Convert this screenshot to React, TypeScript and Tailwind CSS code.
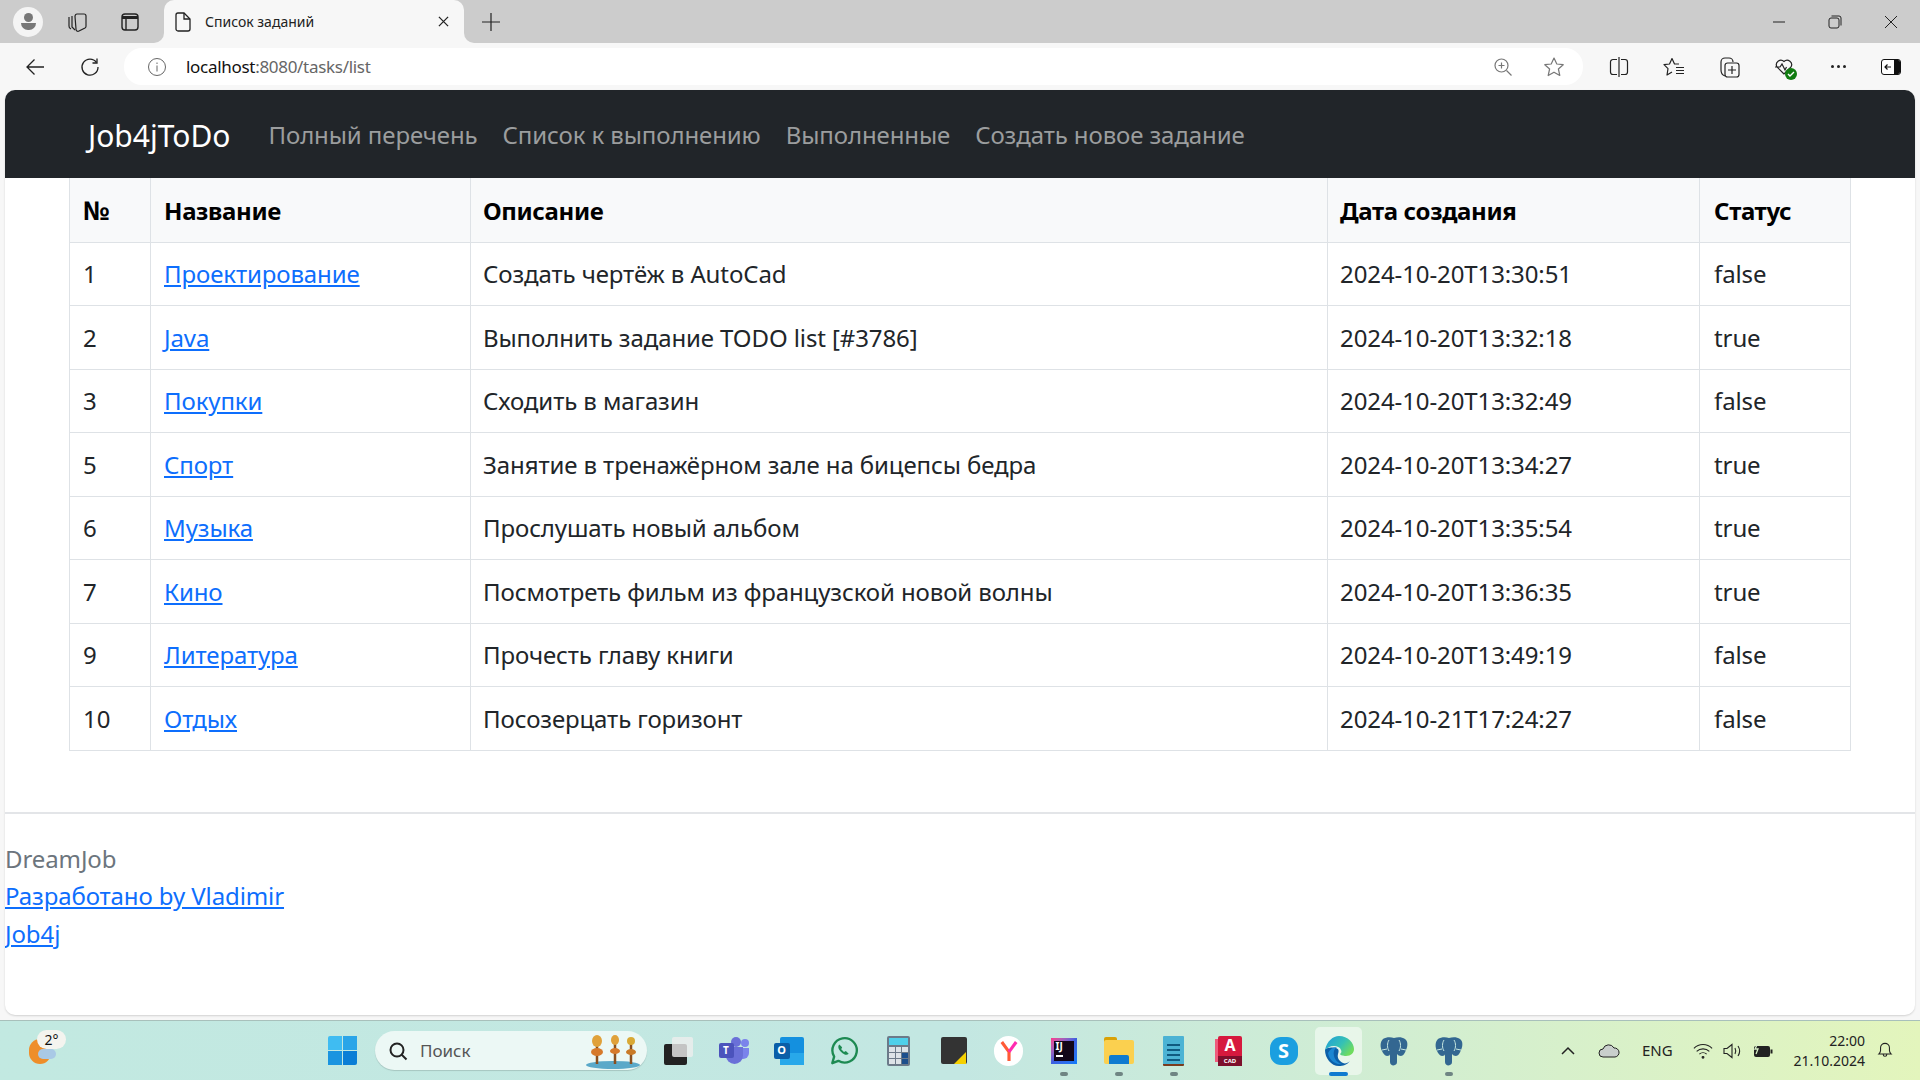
import type { ReactNode } from 'react';

const rows = [
  ['1', 'Проектирование', 'Создать чертёж в AutoCad', '2024-10-20T13:30:51', 'false'],
  ['2', 'Java', 'Выполнить задание TODO list [#3786]', '2024-10-20T13:32:18', 'true'],
  ['3', 'Покупки', 'Сходить в магазин', '2024-10-20T13:32:49', 'false'],
  ['5', 'Спорт', 'Занятие в тренажёрном зале на бицепсы бедра', '2024-10-20T13:34:27', 'true'],
  ['6', 'Музыка', 'Прослушать новый альбом', '2024-10-20T13:35:54', 'true'],
  ['7', 'Кино', 'Посмотреть фильм из французской новой волны', '2024-10-20T13:36:35', 'true'],
  ['9', 'Литература', 'Прочесть главу книги', '2024-10-20T13:49:19', 'false'],
  ['10', 'Отдых', 'Посозерцать горизонт', '2024-10-21T17:24:27', 'false'],
];

const th = 'border border-t-0 border-[#dee2e6] pt-[2px]';
const td = 'border border-[#dee2e6] pt-px';

function ToolCell({ children }: { children: ReactNode }) {
  return <div className="w-[55px] shrink-0 flex items-center justify-center">{children}</div>;
}

function TaskCell({ children, running }: { children: ReactNode; running?: boolean }) {
  return (
    <div className="w-[55px] h-[60px] shrink-0 relative flex items-center justify-center">
      {children}
      {running && <div className="absolute bottom-[5px] w-[8px] h-[4px] rounded-full bg-[#6f8583]" />}
    </div>
  );
}

function Elephant() {
  return (
    <svg width="30" height="30" viewBox="0 0 30 30">
      <path d="M15 2C12 1 7 1 4 3 1 6 1 11 3 15c1 2 3 5 5 5 2 0 3-1 3-2v8c0 3 3 4 5 3 2-1 2-2 2-4v-7c1 1 2 2 4 2 2 0 4-3 5-6 2-4 2-9-1-11-3-2-7-2-11-1z" fill="#336791" />
      <path d="M10 4c-2 3-2 8 0 11M20 4c2 3 2 8 0 11M3 14l5-1M27 14l-5-1" fill="none" stroke="#c5e6e0" strokeWidth="1" />
    </svg>
  );
}

export default function App() {
  return (
    <div className="w-[1920px] h-[1080px] flex flex-col overflow-hidden bg-[#f7f7f7] font-['Noto_Sans','Open_Sans',sans-serif]">
      {/* Tabs */}
      <div className="h-[43px] shrink-0 bg-[#cccccc] flex items-center">
        <div className="ml-[13px] w-[30px] h-[30px] rounded-full bg-[#f4f4f4] flex flex-col items-center justify-center">
          <div className="w-[9px] h-[9px] rounded-full bg-[#777]" />
          <div className="w-[15px] h-[7px] rounded-b-full rounded-t-sm bg-[#777] mt-px" />
        </div>
        <svg width="21" height="20" viewBox="0 0 21 20" className="ml-[24px]" fill="none" stroke="#222" strokeWidth="1.2">
          <path d="M2 5v9a3 3 0 0 0 2 3" />
          <path d="M5 4v11l3 3" />
          <path d="M8 4.500C8 3 9 2 10 2h7a2 2 0 0 1 2 2v10a2 2 0 0 1-1 2l-6 3a2 2 0 0 1-3-2z" />
        </svg>
        <svg width="18" height="18" viewBox="0 0 18 18" className="ml-[33px]" fill="none" stroke="#222" strokeWidth="1.4">
          <rect x="1" y="1" width="16" height="16" rx="3" />
          <path d="M1 4.500h16" strokeWidth="3" />
          <path d="M5 5v12" />
        </svg>
        <div className="ml-[25px] w-[300px] h-[43px] bg-[#f7f7f7] rounded-t-[10px] flex items-center pl-[11px] pr-[15px] relative">
          <div className="absolute left-[-10px] bottom-0 w-[10px] h-[10px] bg-[#f7f7f7]">
            <div className="w-full h-full bg-[#cccccc] rounded-br-[10px]" />
          </div>
          <div className="absolute right-[-10px] bottom-0 w-[10px] h-[10px] bg-[#f7f7f7]">
            <div className="w-full h-full bg-[#cccccc] rounded-bl-[10px]" />
          </div>
          <svg width="16" height="20" viewBox="0 0 16 20" fill="none" stroke="#222" strokeWidth="1.3">
            <path d="M1 3a2 2 0 0 1 2-2h6l6 6v10a2 2 0 0 1-2 2H3a2 2 0 0 1-2-2z" />
            <path d="M9 1v6h6" />
          </svg>
          <span className="ml-[14px] text-[14px] text-[#222] flex-1">Список заданий</span>
          <svg width="11" height="11" viewBox="0 0 12 12" stroke="#222" strokeWidth="1.4">
            <path d="M1 1l10 10M11 1L1 11" />
          </svg>
        </div>
        <svg width="18" height="18" viewBox="0 0 18 18" className="ml-[18px]" stroke="#222" strokeWidth="1.2">
          <path d="M9 0v18M0 9h18" />
        </svg>
        <div className="flex-1" />
        <svg width="14" height="14" viewBox="0 0 14 14" stroke="#222" strokeWidth="1">
          <path d="M1 7h12" />
        </svg>
        <svg width="14" height="14" viewBox="0 0 14 14" className="ml-[42px]" fill="none" stroke="#222" strokeWidth="1">
          <rect x="1" y="3" width="10" height="10" rx="2" />
          <path d="M3.500 1H11a2 2 0 0 1 2 2v7.500" />
        </svg>
        <svg width="14" height="14" viewBox="0 0 14 14" className="ml-[42px] mr-[22px]" stroke="#222" strokeWidth="1">
          <path d="M1 1l12 12M13 1L1 13" />
        </svg>
      </div>
      {/* Toolbar */}
      <div className="h-[47px] shrink-0 flex items-center">
        <svg width="20" height="20" viewBox="0 0 20 20" className="ml-[25px]" fill="none" stroke="#222" strokeWidth="1.3">
          <path d="M19 10H2M9.500 2.500L2 10l7.500 7.500" />
        </svg>
        <svg width="20" height="20" viewBox="0 0 20 20" className="ml-[35px]" fill="none" stroke="#222" strokeWidth="1.3">
          <path d="M16.500 5.500A8 8 0 1 0 18 10" />
          <path d="M17 1.500V6h-4.500" />
        </svg>
        <div className="ml-[24px] w-[1459px] h-[37px] bg-white rounded-[18px] flex items-center">
          <svg width="20" height="20" viewBox="0 0 20 20" className="ml-[23px]" fill="none" stroke="#666" strokeWidth="1">
            <circle cx="10" cy="10" r="8.500" />
            <path d="M10 8.500v6M10 5.500V7" />
          </svg>
          <span className="ml-[19px] text-[17px] tracking-[-0.3px]">
            <span className="text-[#111]">localhost</span>
            <span className="text-[#666]">:8080/tasks/list</span>
          </span>
          <div className="flex-1" />
          <svg width="20" height="20" viewBox="0 0 20 20" fill="none" stroke="#777" strokeWidth="1.2">
            <circle cx="8.500" cy="8.500" r="6.500" />
            <path d="M13.500 13.500l5 5M8.500 5.500v6M5.500 8.500h6" />
          </svg>
          <svg width="22" height="22" viewBox="0 0 22 22" className="ml-[30px] mr-[18px]" fill="none" stroke="#777" strokeWidth="1.2" strokeLinejoin="round">
            <path d="M11 2l2.800 6 6.400.7-4.800 4.300 1.400 6.500L11 16.200 5.200 19.500 6.600 13 1.800 8.700 8.200 8z" />
          </svg>
        </div>
        <div className="ml-[8px] flex">
          <ToolCell>
            <svg width="20" height="20" viewBox="0 0 20 20" fill="none" stroke="#222" strokeWidth="1.2">
              <path d="M8 2.500H4A2.500 2.500 0 0 0 1.500 5v10A2.500 2.500 0 0 0 4 17.500h4M12 2.500h4A2.500 2.500 0 0 1 18.500 5v10a2.500 2.500 0 0 1-2.500 2.500h-4M10 0v20" />
            </svg>
          </ToolCell>
          <ToolCell>
            <svg width="22" height="20" viewBox="0 0 22 20" fill="none" stroke="#222" strokeWidth="1.2" strokeLinejoin="round">
              <path d="M16 7h-4.500L9 1.500 6.500 7 1 7.700l4 4L4 18l5-3M13 10.500h8M13 13.500h8M13 16.500h8" />
            </svg>
          </ToolCell>
          <ToolCell>
            <svg width="22" height="22" viewBox="0 0 22 22" fill="none" stroke="#222" strokeWidth="1.2">
              <rect x="7" y="7" width="14" height="14" rx="2.500" />
              <path d="M14 10v8M10 14h8M3 14V6a4 4 0 0 1 4-4h4a4 4 0 0 1 4 4M3 14c0 3 1 5 4 6" />
            </svg>
          </ToolCell>
          <ToolCell>
            <div className="relative w-[20px] h-[20px]">
              <svg width="20" height="20" viewBox="0 0 20 20" fill="none" stroke="#222" strokeWidth="1.2">
                <path d="M10 17L3 10a4.500 4.500 0 0 1 7-5.500A4.500 4.500 0 0 1 17 10l-7 7zM1 10h5l2-3 3 6 1.500-3" />
              </svg>
              <div className="absolute right-[-3px] bottom-[-3px] w-[12px] h-[12px] rounded-full bg-[#107c10] flex items-center justify-center">
                <svg width="8" height="8" viewBox="0 0 8 8" fill="none" stroke="#fff" strokeWidth="1.4">
                  <path d="M1 4l2 2 4-4" />
                </svg>
              </div>
            </div>
          </ToolCell>
          <ToolCell>
            <div className="flex gap-[3px]">
              <div className="w-[3px] h-[3px] rounded-full bg-[#222]" />
              <div className="w-[3px] h-[3px] rounded-full bg-[#222]" />
              <div className="w-[3px] h-[3px] rounded-full bg-[#222]" />
            </div>
          </ToolCell>
          <div className="w-[50px] shrink-0 flex items-center justify-center">
            <svg width="20" height="16" viewBox="0 0 20 16" fill="none">
              <rect x="0.500" y="0.500" width="19" height="15" rx="2.500" fill="#fff" stroke="#111" />
              <path d="M13 1h4a2 2 0 0 1 2 2v10a2 2 0 0 1-2 2h-4z" fill="#111" />
              <path d="M10 8H4M6.500 5.500L4 8l2.500 2.500" stroke="#111" strokeWidth="1.2" />
            </svg>
          </div>
        </div>
      </div>
      {/* Page */}
      <div className="flex-1 ml-[5px] mr-[5px] mb-[5px] bg-white rounded-[10px] flex flex-col overflow-hidden shadow-[0_1px_2px_rgba(0,0,0,0.15)]">
        <nav className="h-[88px] shrink-0 bg-[#212529] flex items-center pl-[83px] pt-[2px]">
          <span className="text-[30px] text-white mr-[38px]">Job4jToDo</span>
          <div className="flex gap-[25px] text-[24px] tracking-[-0.1px] text-[#9b9d9e]">
            <span>Полный перечень</span>
            <span>Список к выполнению</span>
            <span>Выполненные</span>
            <span>Создать новое задание</span>
          </div>
        </nav>
        <div className="pl-[64px]">
          <table className="w-[1781px] table-fixed border-collapse text-[24px] tracking-[-0.1px] text-[#212529]">
            <colgroup>
              <col className="w-[81px]" />
              <col className="w-[320px]" />
              <col className="w-[857px]" />
              <col className="w-[372px]" />
              <col className="w-[151px]" />
            </colgroup>
            <thead>
              <tr className="h-[64px] bg-[#f8f9fa] font-bold text-left text-black tracking-[-0.35px]">
                <th className={`${th} px-[13px] text-[26px]`}>№</th>
                <th className={`${th} px-[13px]`}>Название</th>
                <th className={`${th} px-[12px]`}>Описание</th>
                <th className={`${th} px-[12px]`}>Дата создания</th>
                <th className={`${th} px-[14px]`}>Статус</th>
              </tr>
            </thead>
            <tbody>
              {rows.map((r) => (
                <tr key={r[0]} className="h-[63.5px]">
                  <td className={`${td} px-[13px]`}>{r[0]}</td>
                  <td className={`${td} px-[13px]`}>
                    <a className="text-[#0d6efd] underline">{r[1]}</a>
                  </td>
                  <td className={`${td} px-[12px]`}>{r[2]}</td>
                  <td className={`${td} px-[12px]`}>{r[3]}</td>
                  <td className={`${td} px-[14px]`}>{r[4]}</td>
                </tr>
              ))}
            </tbody>
          </table>
        </div>
        <footer className="mt-[61px] border-t-2 border-[#e3e5e8] pt-[26px] text-[24px] tracking-[-0.1px] leading-[37.5px]">
          <div className="text-[#6c757d]">DreamJob</div>
          <div><a className="text-[#0d6efd] underline">Разработано by Vladimir</a></div>
          <div><a className="text-[#0d6efd] underline">Job4j</a></div>
        </footer>
      </div>
      {/* Taskbar */}
      <div className="h-[60px] shrink-0 border-t border-[#a8c0bb] bg-gradient-to-r from-[#c2e9e1] via-[#c3e7e2] to-[#e3f5bc] flex items-center">
        {/* Weather */}
        <div className="ml-[28px] w-[30px] h-[30px] relative">
          <div className="absolute left-px top-[3px] w-[22px] h-[25px] rounded-full bg-[#ee8e2a]" />
          <div className="absolute left-[10px] top-[13px] w-[18px] h-[10px] rounded-full bg-[#a9c9e6]" />
          <div className="absolute left-[9px] top-[-6px] w-[29px] h-[19px] rounded-full bg-[#f4f4ef] text-[14px] flex items-center justify-center text-[#111]">2°</div>
        </div>
        <div className="ml-[257px] w-[55px] flex justify-center">
          <div className="grid grid-cols-2 gap-[1px] w-[29px] h-[29px]">
            <div className="bg-[#3fbcf2] rounded-tl-[2px]" />
            <div className="bg-[#2aa5e8]" />
            <div className="bg-[#1a94e0]" />
            <div className="bg-[#0a7ed6] rounded-br-[2px]" />
          </div>
        </div>
        {/* Search */}
        <div className="ml-[5px] w-[272px] h-[39px] rounded-full bg-[#ecf8f5] flex items-center shadow-[0_1px_1px_rgba(0,0,0,0.15)]">
          <svg width="20" height="20" viewBox="0 0 20 20" className="ml-[13px]" fill="none" stroke="#222" strokeWidth="2">
            <circle cx="9" cy="9" r="6.500" />
            <path d="M13.500 13.500l5 5" />
          </svg>
          <span className="ml-[12px] text-[17px] text-[#555]">Поиск</span>
          <div className="flex-1" />
          <svg width="55" height="38" viewBox="0 0 55 38" className="mr-[7px]">
            <ellipse cx="28" cy="33" rx="27" ry="4" fill="#5aa9c9" />
            <path d="M12 32V4M30 32V4M46 32V6" stroke="#8a4f1f" strokeWidth="2.5" />
            <ellipse cx="12" cy="9" rx="5" ry="6" fill="#e0a13a" />
            <ellipse cx="12" cy="20" rx="6" ry="4" fill="#d6792a" />
            <ellipse cx="30" cy="8" rx="4" ry="5" fill="#e0a13a" />
            <ellipse cx="30" cy="19" rx="5" ry="3" fill="#d6792a" />
            <ellipse cx="46" cy="9" rx="4" ry="4" fill="#d9a935" />
            <ellipse cx="46" cy="20" rx="5" ry="3" fill="#c97a27" />
          </svg>
        </div>
        <div className="ml-[4px] flex">
          {/* Task view */}
          <TaskCell>
            <div className="relative w-[29px] h-[28px]">
              <div className="absolute left-0 bottom-0 w-[23px] h-[21px] rounded-[2px] bg-[#222]" />
              <div className="absolute right-0 top-0 w-[21px] h-[20px] rounded-[2px] bg-[#eeeeee]/80" />
            </div>
          </TaskCell>
          {/* Teams */}
          <TaskCell>
            <div className="w-[30px] h-[27px] relative">
              <div className="absolute right-0 top-[2px] w-[8px] h-[8px] rounded-full bg-[#7b83eb]" />
              <div className="absolute right-0 top-[11px] w-[12px] h-[11px] rounded-b-full bg-[#7b83eb]" />
              <div className="absolute left-[12px] top-0 w-[10px] h-[10px] rounded-full bg-[#6a70d8]" />
              <div className="absolute left-[7px] top-[10px] w-[17px] h-[17px] rounded-b-full bg-[#6a70d8]" />
              <div className="absolute left-0 top-[6px] w-[15px] h-[15px] rounded-[2px] bg-[#4b53bc] text-white text-[10px] font-bold flex items-center justify-center">T</div>
            </div>
          </TaskCell>
          {/* Outlook */}
          <TaskCell>
            <div className="w-[30px] h-[28px] relative">
              <div className="absolute right-0 top-0 w-[24px] h-[28px] rounded-[2px] bg-[#1490df]" />
              <div className="absolute right-0 bottom-0 w-[24px] h-[12px] bg-[#28a8ea]" />
              <div className="absolute left-0 top-[6px] w-[16px] h-[16px] rounded-[2px] bg-[#0a5ea8] text-white text-[11px] font-bold flex items-center justify-center">O</div>
            </div>
          </TaskCell>
          {/* WhatsApp */}
          <TaskCell>
            <svg width="30" height="30" viewBox="0 0 30 32" fill="none">
              <path d="M2.500 29l2-7A13 13 0 1 1 9 26.500z" stroke="#1d8a52" strokeWidth="2.500" strokeLinejoin="round" />
              <path d="M10 9c-2 2-1 5 2 8s6 4 8 2l-3-3-2 1-3-3 1-2z" fill="#1d8a52" />
            </svg>
          </TaskCell>
          {/* Calculator */}
          <TaskCell>
            <div className="w-[23px] h-[30px] rounded-[2px] bg-[#6c7a89] p-[2px] flex flex-col gap-[2px]">
              <div className="h-[7px] bg-[#4fd0ea]" />
              <div className="flex-1 grid grid-cols-3 gap-[1px]">
                <div className="bg-[#dde3e8]" />
                <div className="bg-[#dde3e8]" />
                <div className="bg-[#dde3e8]" />
                <div className="bg-[#dde3e8]" />
                <div className="bg-[#dde3e8]" />
                <div className="bg-[#1d4f8c]" />
                <div className="bg-[#dde3e8]" />
                <div className="bg-[#dde3e8]" />
                <div className="bg-[#1d4f8c]" />
              </div>
            </div>
          </TaskCell>
          {/* Sticky notes */}
          <TaskCell>
            <svg width="26" height="27" viewBox="0 0 26 27">
              <rect width="26" height="27" rx="2" fill="#333" />
              <path d="M13 27l12-12v12z" fill="#f5d000" />
            </svg>
          </TaskCell>
          {/* Yandex */}
          <TaskCell>
            <div className="w-[29px] h-[30px] rounded-full bg-white flex items-center justify-center">
              <svg width="18" height="22" viewBox="0 0 20 24" fill="none" strokeWidth="3.5">
                <path d="M2 2l8 11v10" stroke="#ff5a36" />
                <path d="M18 2l-8 11" stroke="#ff2bb0" />
              </svg>
            </div>
          </TaskCell>
          {/* IntelliJ */}
          <TaskCell running>
            <div className="w-[26px] h-[26px] bg-gradient-to-br from-[#ff318c] via-[#3b5fe0] to-[#087cfa] p-[3px]">
              <div className="w-full h-full bg-[#120618] text-white text-[10px] leading-[11px] font-bold pl-[2px]">
                IJ
                <div className="w-[7px] h-[2px] bg-white mt-[3px]" />
              </div>
            </div>
          </TaskCell>
          {/* Explorer */}
          <TaskCell running>
            <div className="w-[30px] h-[27px] relative">
              <div className="absolute left-0 top-0 w-[13px] h-[6px] rounded-t-[2px] bg-[#d9a106]" />
              <div className="absolute left-0 top-[3px] w-[30px] h-[24px] rounded-[2px] bg-[#fbd04f]" />
              <div className="absolute left-[5px] bottom-0 w-[20px] h-[9px] rounded-t-[2px] bg-[#0f7bd0]" />
            </div>
          </TaskCell>
          {/* Notepad */}
          <TaskCell running>
            <div className="w-[21px] h-[30px] rounded-[1px] bg-[#4cb3d4] border-b-2 border-[#7a3b1e] flex flex-col gap-[3px] pt-[8px] px-[4px]">
              <div className="h-[2px] bg-[#105a80]" />
              <div className="h-[2px] bg-[#105a80]" />
              <div className="h-[2px] bg-[#105a80]" />
              <div className="h-[2px] bg-[#105a80]" />
            </div>
          </TaskCell>
          {/* AutoCAD */}
          <TaskCell>
            <div className="w-[27px] h-[30px] relative">
              <div className="absolute left-0 top-[3px] w-[8px] h-[23px] bg-[#ee5b7c]" />
              <div className="absolute left-[3px] top-0 w-[24px] h-[30px] rounded-[2px] bg-[#d6193e] text-white flex flex-col items-center justify-between">
                <span className="text-[16px] font-bold leading-[18px]">A</span>
                <span className="w-full bg-[#7d0f2c] text-center text-[6px] font-bold leading-[10px]">CAD</span>
              </div>
            </div>
          </TaskCell>
          {/* Skype */}
          <TaskCell>
            <div className="w-[28px] h-[28px] rounded-[11px] bg-[#1b9fe0] text-white text-[20px] leading-none font-bold flex items-center justify-center">S</div>
          </TaskCell>
          {/* Edge */}
          <TaskCell>
            <div className="w-[47px] h-[48px] rounded-[5px] bg-white/50 flex items-center justify-center">
              <svg width="30" height="30" viewBox="0 0 30 30">
                <defs>
                  <linearGradient id="edgeTop" x1="0" y1="0" x2="1" y2="0.6">
                    <stop offset="0" stopColor="#1f9bdb" />
                    <stop offset="0.6" stopColor="#35c1b5" />
                    <stop offset="1" stopColor="#6fdc5e" />
                  </linearGradient>
                </defs>
                <path d="M1 14C1 12 8 11 12 12c3 1 3 3 2 6-1 4 1 7 5 9 2 1 5 0 7-2-3 4-7 5-11 5C7 30 1 22 1 14z" fill="#0c5fa8" />
                <path d="M1 14C3 5 9 0 15 0c9 0 15 7 15 13 0 4-3 7-8 7-3 0-6-1-6-2 1-1 2-2 1-4-1-3-4-4-7-4-4 0-7 2-9 4z" fill="url(#edgeTop)" />
                <path d="M13 11c-3 2-4 5-3 9 1 4 4 7 8 8-7 1-13-4-14-11 2-4 5-6 9-6z" fill="#1a86d2" />
              </svg>
            </div>
            <div className="absolute bottom-[5px] w-[19px] h-[4px] rounded-full bg-[#0f7bd0]" />
          </TaskCell>
          <TaskCell>
            <Elephant />
          </TaskCell>
          <TaskCell running>
            <Elephant />
          </TaskCell>
        </div>
        {/* Tray */}
        <svg width="14" height="10" viewBox="0 0 14 10" className="ml-[85px]" fill="none" stroke="#222" strokeWidth="1.5">
          <path d="M1 8l6-6 6 6" />
        </svg>
        <svg width="22" height="14" viewBox="0 0 22 14" className="ml-[23px]">
          <path d="M5 13a4 4 0 0 1 0-8 6 6 0 0 1 11-1 4.500 4.500 0 0 1 1 9z" fill="#c9cfcc" stroke="#222" strokeWidth="1" />
        </svg>
        <span className="ml-[22px] w-[28px] text-[15px] text-[#222]">ENG</span>
        <svg width="20" height="18" viewBox="0 0 22 18" className="ml-[23px]" fill="none" stroke="#222" strokeWidth="1.2">
          <path d="M1 6a14 14 0 0 1 20 0M4 9.500a10 10 0 0 1 14 0M7 12.500a6 6 0 0 1 8 0" />
          <circle cx="11" cy="16" r="1" fill="#222" />
        </svg>
        <svg width="20" height="18" viewBox="0 0 20 18" className="ml-[10px]" fill="none" stroke="#222" strokeWidth="1.1">
          <path d="M1 6.500h3L9 2.500v13l-5-4H1zM12 6c1 2 1 4 0 6M15 4c2 3 2 7 0 10" />
        </svg>
        <svg width="20" height="16" viewBox="0 0 20 16" className="ml-[10px]">
          <rect x="1" y="3" width="16" height="11" rx="2" fill="#222" />
          <rect x="17.500" y="6.500" width="2" height="4" fill="#222" />
          <path d="M5 0L2 6h3L3 11" fill="none" stroke="#d7efc8" strokeWidth="1.3" />
        </svg>
        <div className="ml-[18px] w-[74px] text-right text-[14px] leading-[20px] text-[#222]">
          <div>22:00</div>
          <div className="whitespace-nowrap">21.10.2024</div>
        </div>
        <svg width="16" height="19" viewBox="0 0 18 20" className="ml-[12px]" fill="none" stroke="#222" strokeWidth="1.2">
          <path d="M2 14c1-1 2-2 2-4V7a5 5 0 0 1 10 0v3c0 2 1 3 2 4zM7 14.500a2 2 0 0 0 4 0" />
        </svg>
      </div>
    </div>
  );
}
